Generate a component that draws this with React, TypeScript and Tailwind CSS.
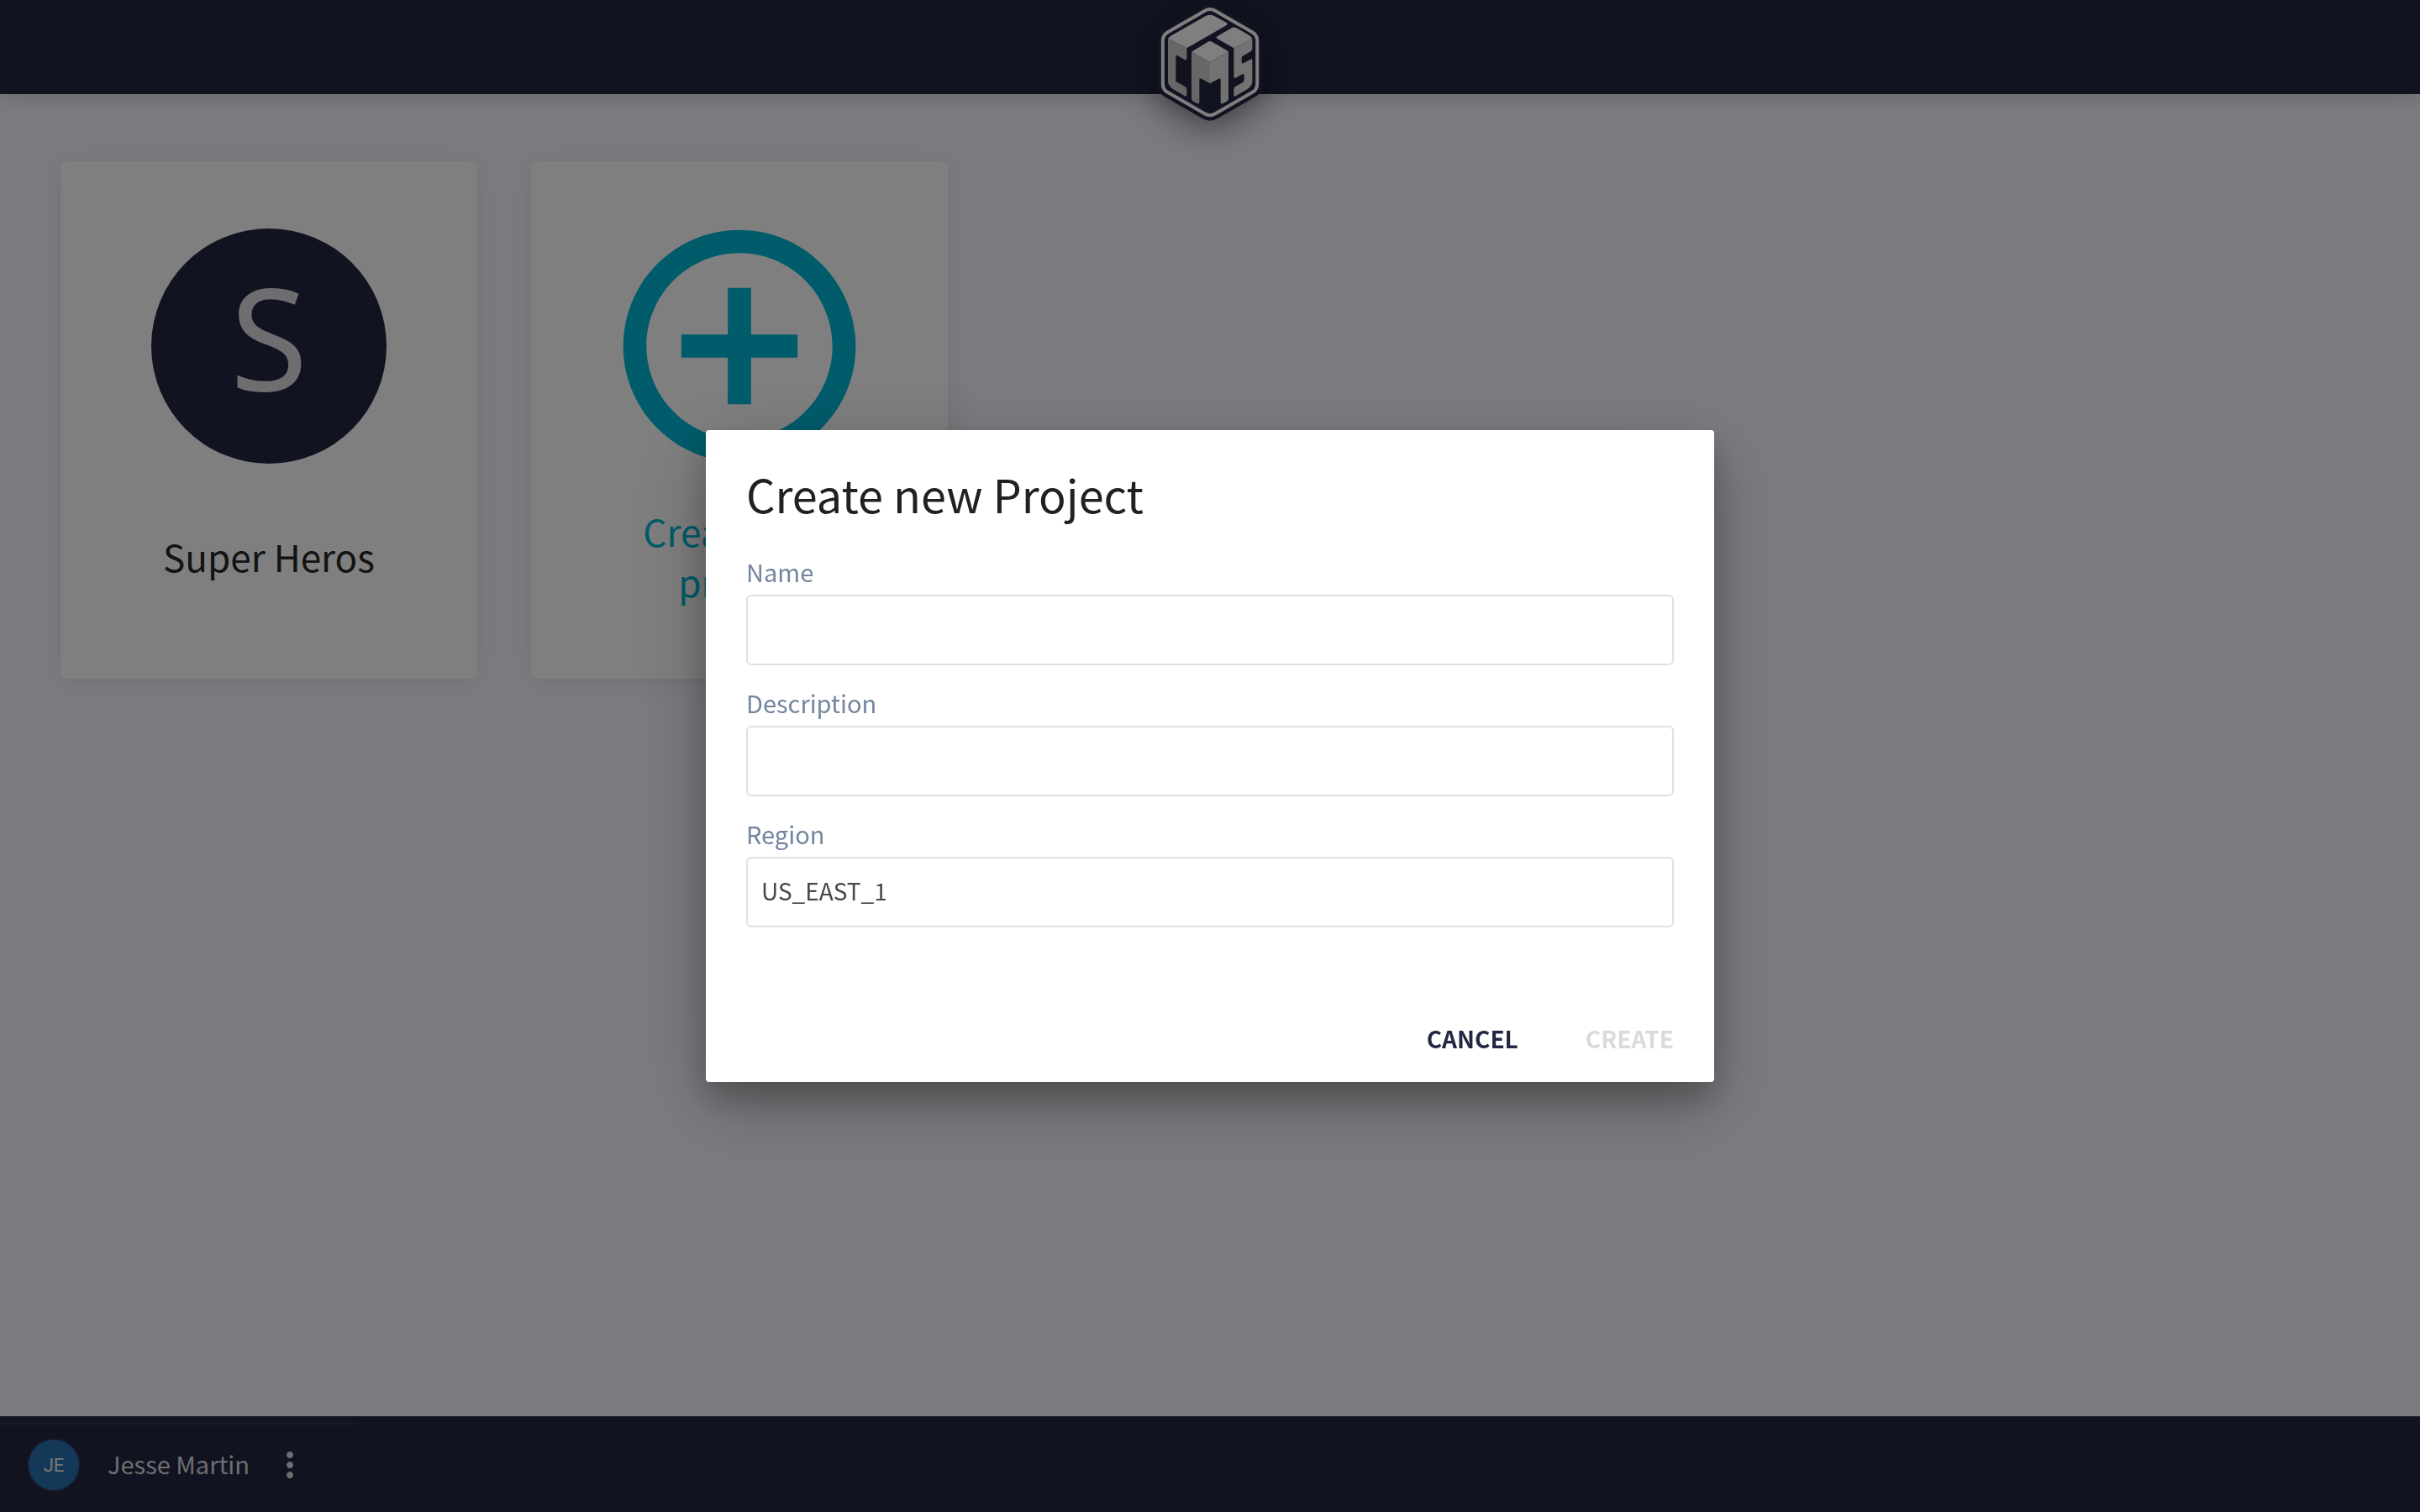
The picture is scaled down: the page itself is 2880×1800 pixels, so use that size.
import React from "react";
import type { ReactNode } from "react";

function Logo() {
  return (
    <svg
      viewBox="90 24 360 420"
      className="h-35 w-30 overflow-visible drop-shadow-[0_10px_22px_rgba(0,0,0,0.5)]"
      role="img"
      aria-label="CMS"
    >
      <path
        d="M252 38.5A36 36 0 0 1 288 38.5L420.5 114.7A36 36 0 0 1 438.5 146V299A36 36 0 0 1 420.5 330.3L288 406.5A36 36 0 0 1 252 406.5L119.5 330.3A36 36 0 0 1 101.5 299V146A36 36 0 0 1 119.5 114.7Z"
        fill="#242743"
        stroke="#242743"
        strokeWidth="38"
      />
      <path
        d="M252 38.5A36 36 0 0 1 288 38.5L420.5 114.7A36 36 0 0 1 438.5 146V299A36 36 0 0 1 420.5 330.3L288 406.5A36 36 0 0 1 252 406.5L119.5 330.3A36 36 0 0 1 101.5 299V146A36 36 0 0 1 119.5 114.7Z"
        fill="none"
        stroke="#fff"
        strokeWidth="12"
      />
      <path d="M120 138Q124 131 135 125L255 57Q270 49 285 57L328 80Q337 86 328 91L187 172Z" fill="#fff" />
      <path d="M120 138L187 172V208Q187 216 180 213L148 196V291L180 309Q187 313 187 319V339Q187 347 180 343L137 318Q120 305 120 288Z" fill="#cecece" />
      <path d="M204 185L263 149Q270 145 277 149L336 184L270 222Z" fill="#fff" />
      <path d="M204 185L270 222V298L239 281Q232 277 232 285V365Q232 373 225 370L210 362Q204 359 204 352Z" fill="#cecece" />
      <path d="M336 184L270 222V298L301 281Q308 277 308 285V365Q308 373 315 370L330 362Q336 359 336 352Z" fill="#e4e4e4" />
      <path d="M296 130L347 100Q355 95 363 99L404 122Q418 131 421 138L355 172L296 138Q290 134 296 130Z" fill="#fff" />
      <path d="M355 172L421 138V175Q421 181 415 184L389 199Q383 202 383 208V221Q383 229 389 226L415 212Q421 209 421 216V292Q421 306 404 318L362 343Q355 347 355 339V319Q355 313 361 309L386 295Q392 291 392 285V271Q392 262 386 265L362 278Q355 281 355 273Z" fill="#e4e4e4" />
    </svg>
  );
}

function ProjectCard({ icon, title, titleClass }: { icon: ReactNode; title: string; titleClass: string }) {
  return (
    <button
      type="button"
      className="flex h-154 w-124 flex-col items-center rounded-[6px] bg-white pt-20 shadow-[0_2px_30px_rgba(36,39,67,0.11)]"
    >
      <span className="flex size-70 items-center justify-center">{icon}</span>
      <span className={`flex h-56 w-70 items-center justify-center pb-1 text-center text-[44px] leading-[60px] ${titleClass}`}>
        {title}
      </span>
    </button>
  );
}

function Field({ id, label, value }: { id: string; label: string; value?: string }) {
  return (
    <div className="flex flex-col">
      <label htmlFor={id} className="h-12 text-[29px] leading-[40px] text-[#74859f]">
        {label}
      </label>
      <input
        id={id}
        type="text"
        defaultValue={value}
        className="h-21 w-full rounded-[6px] border-2 border-[#e0e0e0] bg-white px-4 pb-1 text-[28px] text-[#484848] outline-none"
      />
    </div>
  );
}

export default function App() {
  return (
    <div className="relative flex min-h-screen flex-col bg-[#f6f8ff] font-['Noto_Sans_CJK_SC','Open_Sans',sans-serif]">
      <header className="z-0 flex h-28 justify-center bg-[#242743] pt-2 shadow-[0_4px_24px_rgba(0,0,0,0.16)]">
        <Logo />
      </header>

      <main className="flex flex-1 flex-wrap content-start gap-16 px-18 pt-20">
        <ProjectCard
          title="Super Heros"
          titleClass="text-[#262626]"
          icon={
            <span className="flex size-70 items-center justify-center rounded-full bg-[#242743] pb-6 font-['Noto_Sans',sans-serif] text-[168px] leading-[240px] text-[#dcdce0]">
              S
            </span>
          }
        />
        <ProjectCard
          title="Create new project"
          titleClass="text-[#00b8d6]"
          icon={
            <svg viewBox="0 0 24 24" className="size-83 shrink-0" fill="#00b8d6" aria-hidden="true">
              <path d="M13 7h-2v4H7v2h4v4h2v-4h4v-2h-4V7zm-1-5C6.48 2 2 6.48 2 12s4.48 10 10 10 10-4.48 10-10S17.52 2 12 2zm0 18c-4.41 0-8-3.59-8-8s3.59-8 8-8 8 3.59 8 8-3.59 8-8 8z" />
            </svg>
          }
        />
      </main>

      <footer className="flex h-28.5 flex-col bg-[#242743] pt-2">
        <div className="flex w-106.5 flex-1 items-center border-t-2 border-[#32365c] pb-2 pl-8">
          <span className="flex size-16 items-center justify-center rounded-full border-2 border-[#2e3156] bg-[#2872b0] font-['Roboto',sans-serif] text-[22px] text-[#f0f0e8]">
            JE
          </span>
          <span className="ml-8 pb-1 text-[29px] leading-[44px] text-[#dcdce0]">Jesse Martin</span>
          <button type="button" aria-label="Account menu" className="ml-6">
            <svg viewBox="0 0 24 24" className="size-12" fill="#dcdce0" aria-hidden="true">
              <path d="M12 8c1.1 0 2-.9 2-2s-.9-2-2-2-2 .9-2 2 .9 2 2 2zm0 2c-1.1 0-2 .9-2 2s.9 2 2 2 2-.9 2-2-.9-2-2-2zm0 6c-1.1 0-2 .9-2 2s.9 2 2 2 2-.9 2-2-.9-2-2-2z" />
            </svg>
          </button>
        </div>
      </footer>

      <div className="fixed inset-0 z-10 flex items-center justify-center bg-black/50">
        <form
          role="dialog"
          aria-modal="true"
          aria-labelledby="dialog-title"
          className="flex w-300 flex-col rounded-[4px] bg-white px-12 pt-11 pb-5 shadow-[0_28px_90px_rgba(0,0,0,0.25),0_20px_36px_rgba(0,0,0,0.22)]"
        >
          <h1 id="dialog-title" className="mb-10 text-[54px] leading-[64px] text-[#212121]">
            Create new Project
          </h1>
          <div className="flex flex-col gap-6">
            <Field id="name" label="Name" />
            <Field id="description" label="Description" />
            <Field id="region" label="Region" value="US_EAST_1" />
          </div>
          <div className="mt-25 flex justify-end gap-20 text-[28px] leading-[64px] font-bold">
            <button type="button" className="text-[#242743]">CANCEL</button>
            <button type="submit" disabled className="text-[#dadada]">CREATE</button>
          </div>
        </form>
      </div>
    </div>
  );
}
